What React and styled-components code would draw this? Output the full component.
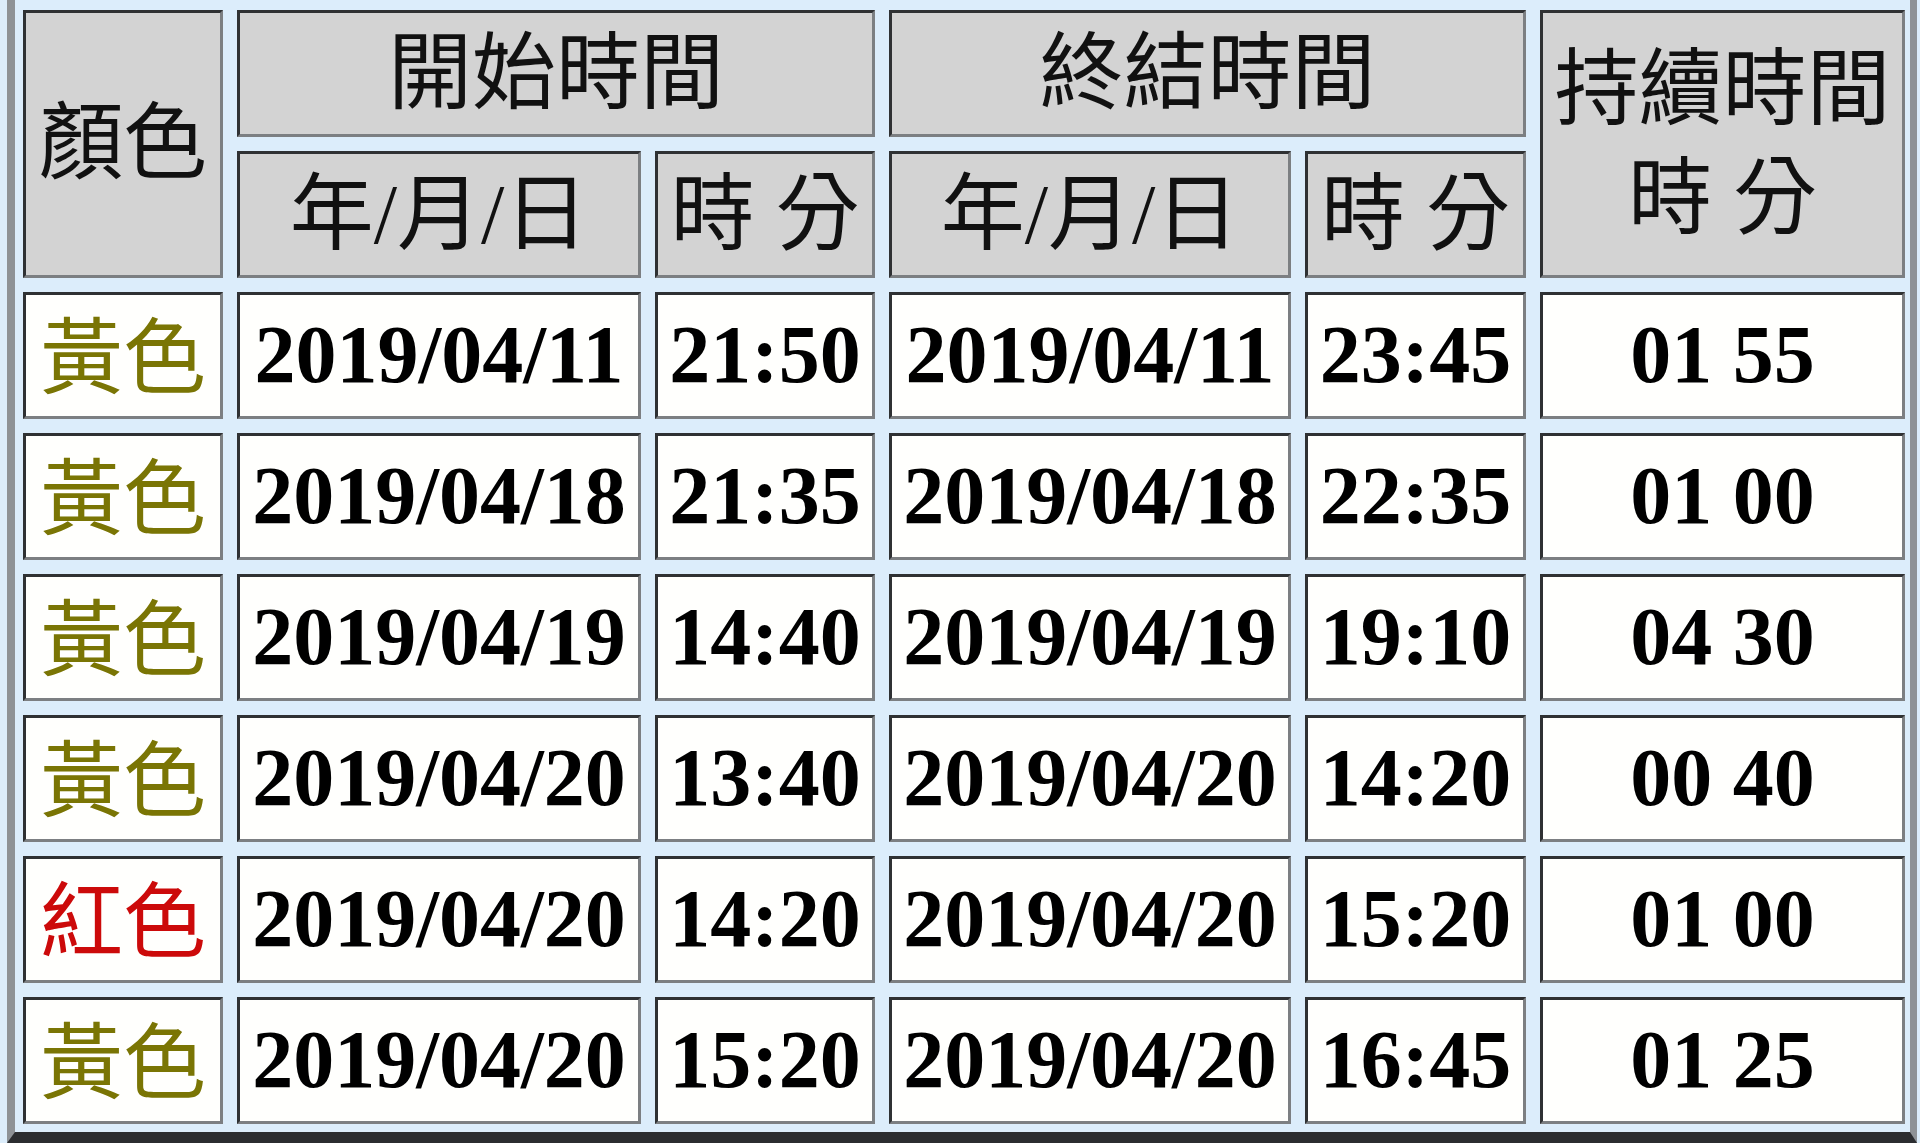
import React from 'react';
import styled, { createGlobalStyle } from 'styled-components';

const GlobalStyle = createGlobalStyle`
  html, body {
    margin: 0;
    padding: 0;
    background: #dcedfb;
    overflow: hidden;
  }
`;

const rows = [
  { color: '黃色', tone: 'yellow', startDate: '2019/04/11', startTime: '21:50', endDate: '2019/04/11', endTime: '23:45', duration: '01 55' },
  { color: '黃色', tone: 'yellow', startDate: '2019/04/18', startTime: '21:35', endDate: '2019/04/18', endTime: '22:35', duration: '01 00' },
  { color: '黃色', tone: 'yellow', startDate: '2019/04/19', startTime: '14:40', endDate: '2019/04/19', endTime: '19:10', duration: '04 30' },
  { color: '黃色', tone: 'yellow', startDate: '2019/04/20', startTime: '13:40', endDate: '2019/04/20', endTime: '14:20', duration: '00 40' },
  { color: '紅色', tone: 'red', startDate: '2019/04/20', startTime: '14:20', endDate: '2019/04/20', endTime: '15:20', duration: '01 00' },
  { color: '黃色', tone: 'yellow', startDate: '2019/04/20', startTime: '15:20', endDate: '2019/04/20', endTime: '16:45', duration: '01 25' },
];

const Frame = styled.div`
  margin: 0 3px 0 7px;
  background: #dcedfb;
  border-left: 8px solid #8e9296;
  border-right: 7px solid #8e9296;
  border-bottom: 11px solid #2b2d30;
  overflow: hidden;
`;

const Table = styled.table`
  width: 1910px;
  margin: -4px 0 -6px -6px;
  table-layout: fixed;
  border-collapse: separate;
  border-spacing: 14px;
  font-family: "Liberation Serif", "Noto Sans CJK TC", serif;

  tr {
    height: 127px;
  }
`;

const Cell = styled.td`
  box-sizing: border-box;
  padding: 0;
  border: 3px solid;
  border-color: #2f3133 #7c7f82 #7c7f82 #2f3133;
  text-align: center;
  vertical-align: middle;
  white-space: nowrap;
`;

const HeadCell = styled(Cell).attrs({ as: 'th' })`
  background: #d3d3d3;
  color: #111;
  font-size: 84px;
  font-weight: 400;
  line-height: 1.3;
`;

const DataCell = styled(Cell)`
  background: #fffffd;
  color: #000;
  font-size: 82px;
  font-weight: 700;
  line-height: 1.2;
`;

const ColorLabel = styled.span`
  font-family: "Noto Sans CJK TC", sans-serif;
  font-size: 83px;
  font-weight: 400;
  line-height: 1.2;
  color: ${({ $tone }) => ($tone === 'red' ? '#cc0a0a' : '#7a7504')};
`;

export default function App() {
  return (
    <>
      <GlobalStyle />
      <Frame>
        <Table>
          <colgroup>
            <col style={{ width: 200 }} />
            <col style={{ width: 404 }} />
            <col style={{ width: 220 }} />
            <col style={{ width: 402 }} />
            <col style={{ width: 221 }} />
            <col style={{ width: 365 }} />
          </colgroup>
          <thead>
            <tr>
              <HeadCell rowSpan={2}>顏色</HeadCell>
              <HeadCell colSpan={2}>開始時間</HeadCell>
              <HeadCell colSpan={2}>終結時間</HeadCell>
              <HeadCell rowSpan={2}>
                持續時間
                <br />
                時 分
              </HeadCell>
            </tr>
            <tr>
              <HeadCell>年/月/日</HeadCell>
              <HeadCell>時 分</HeadCell>
              <HeadCell>年/月/日</HeadCell>
              <HeadCell>時 分</HeadCell>
            </tr>
          </thead>
          <tbody>
            {rows.map((r, i) => (
              <tr key={i}>
                <DataCell>
                  <ColorLabel $tone={r.tone}>{r.color}</ColorLabel>
                </DataCell>
                <DataCell>{r.startDate}</DataCell>
                <DataCell>{r.startTime}</DataCell>
                <DataCell>{r.endDate}</DataCell>
                <DataCell>{r.endTime}</DataCell>
                <DataCell>{r.duration}</DataCell>
              </tr>
            ))}
          </tbody>
        </Table>
      </Frame>
    </>
  );
}
